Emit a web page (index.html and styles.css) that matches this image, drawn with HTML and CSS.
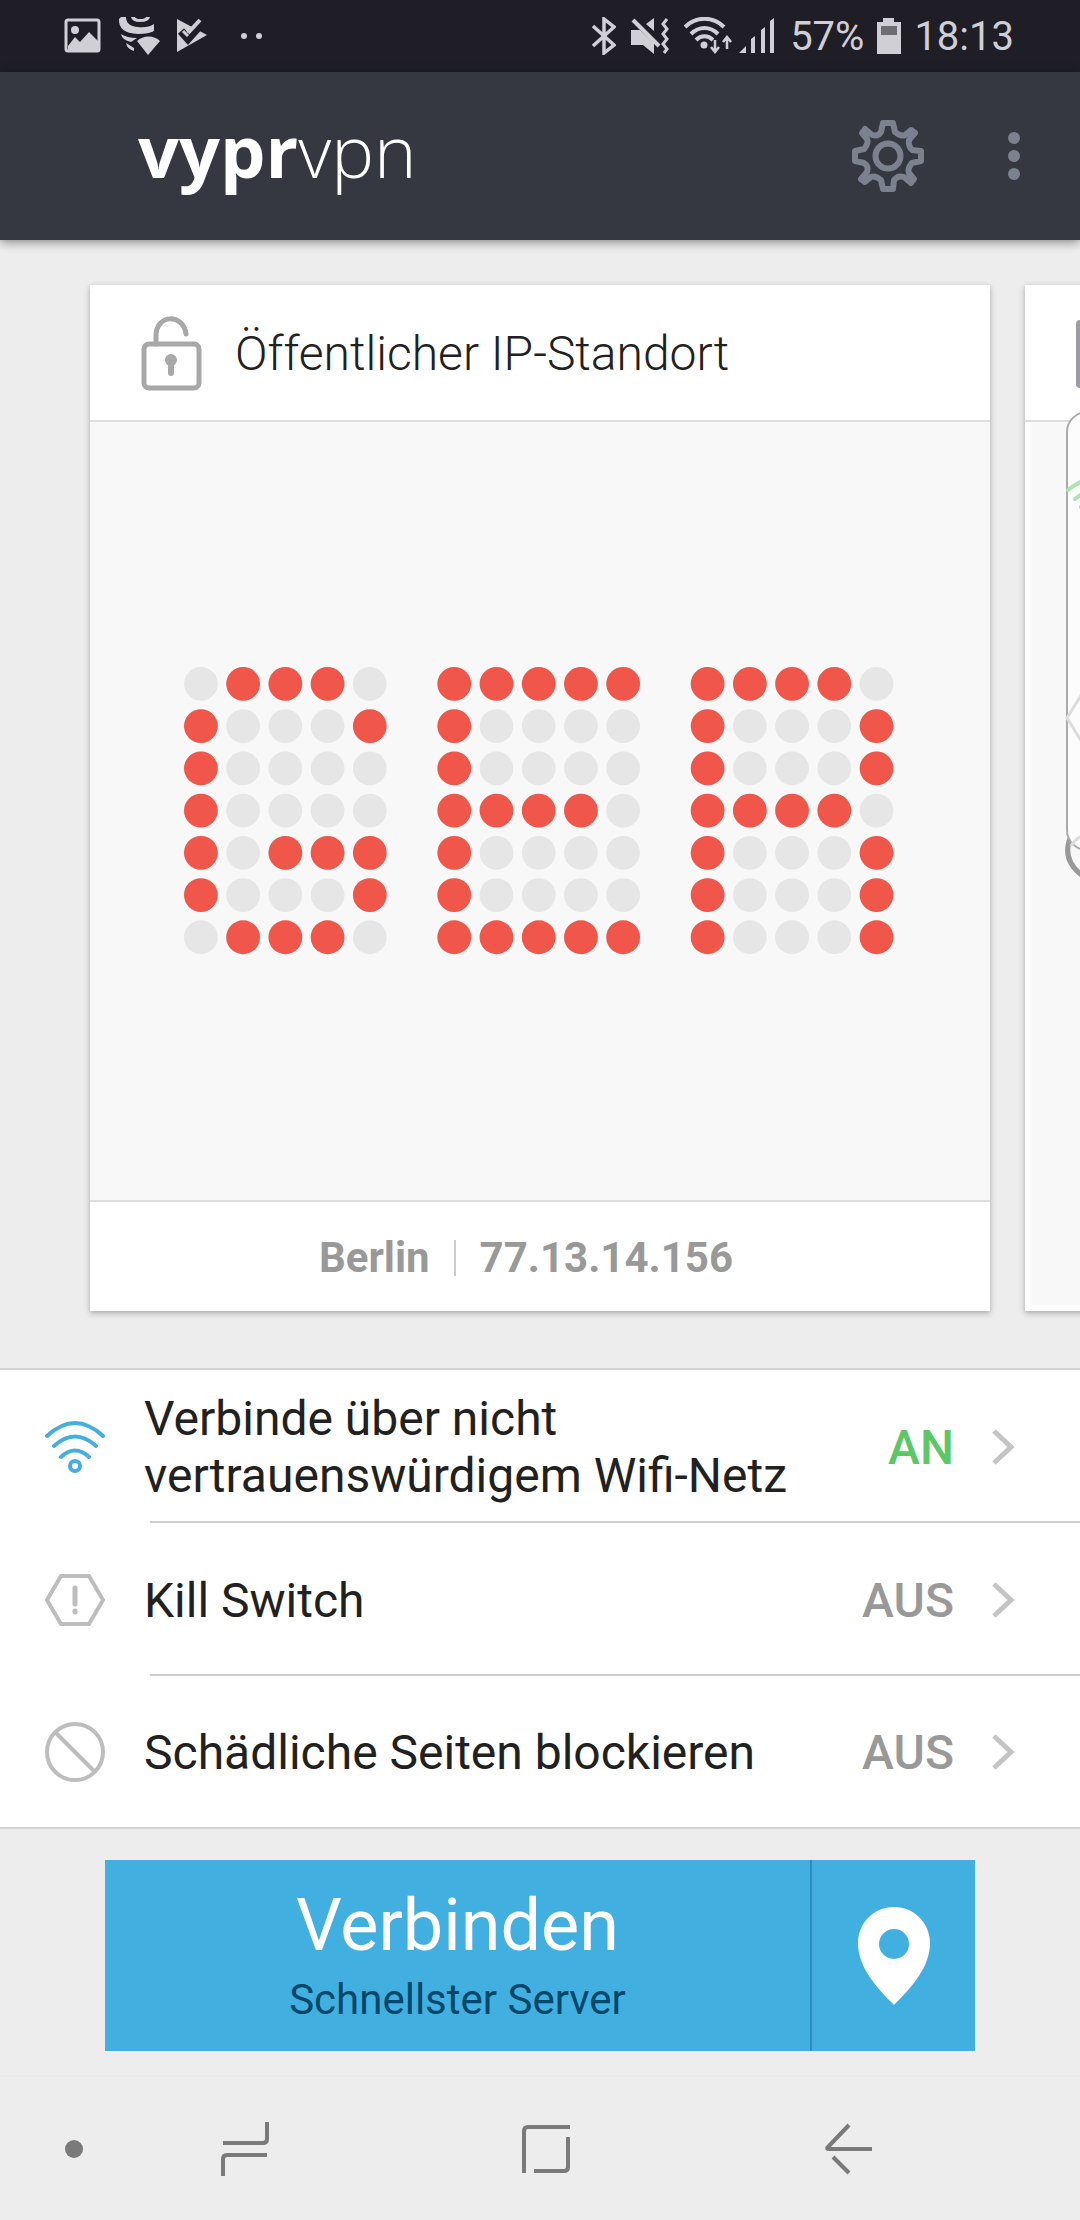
FILE: index.html
```html
<!DOCTYPE html>
<html lang="de">
<head>
<meta charset="utf-8">
<meta name="viewport" content="width=device-width, initial-scale=1">
<title>VyprVPN</title>
<link rel="stylesheet" href="styles.css">
</head>
<body>
<div class="app">
  <div class="status">
    <div class="status-group notices">
      <svg width="38" height="36" viewBox="0 0 38 36"><rect x="2" y="2" width="33" height="31" rx="2" fill="none" stroke="currentColor" stroke-width="3"/><circle cx="11" cy="12" r="4" fill="currentColor"/><path d="M4 28l7-9 5 5 9-10 9 9v9H4z" fill="currentColor"/></svg>
      <svg width="42" height="40" viewBox="0 0 42 40"><path d="M1 3Q0 17 20 18Q31 18 36 15V8Q30 12 20 11Q8 10 8 1H3Z" fill="currentColor"/><path d="M13 1Q14 6 22 6Q31 6 32 1H28Q27 3 22 3Q18 3 17 1Z" fill="currentColor"/><path d="M3 18Q9 22 19 22L13 26Q4 24 3 18ZM8 27L16 32V35Q9 33 8 27Z" fill="currentColor"/><path d="M19 25c6-6 17-6 23 0L30 39z" fill="currentColor"/></svg>
      <svg width="32" height="36" viewBox="0 0 32 36"><path d="M1 1L31 17L1 34Z" fill="currentColor"/><path d="M5 13L12 21L27 4" fill="none" stroke="#1f1e27" stroke-width="8"/><path d="M12 15L24 2" stroke="currentColor" stroke-width="4"/><path d="M7 13l5 5" stroke="currentColor" stroke-width="3"/></svg>
      <svg class="s-dots" width="24" height="8" viewBox="0 0 24 8"><circle cx="4" cy="4" r="3" fill="currentColor"/><circle cx="19" cy="4" r="3" fill="currentColor"/></svg>
    </div>
    <div class="status-group system">
      <svg width="24" height="38" viewBox="0 0 24 38"><path d="M1 9l21 19-10 8V2l10 8L1 29" fill="none" stroke="currentColor" stroke-width="3.500"/></svg>
      <svg width="40" height="38" viewBox="0 0 40 38"><path d="M1 13h9l14 13v11L13 28H1zM16 7l8-6v13z" fill="currentColor"/><path d="M3 3l26 26" stroke="currentColor" stroke-width="4"/><path d="M37 2l-4 5 4 5-4 5 4 5-4 5 4 5-3 4" fill="none" stroke="currentColor" stroke-width="3"/></svg>
      <svg class="s-wifi" width="48" height="38" viewBox="0 0 48 38"><path d="M1 10C12-1 29-1 40 10M7 17c8-8 19-8 27 0M12 23c5-5 12-5 17 0" fill="none" stroke="currentColor" stroke-width="4"/><circle cx="20" cy="28" r="3.500" fill="currentColor"/><path d="M31 23v11M27 30l4 5 4-5M43 32V21M39 25l4-5 4 5" fill="none" stroke="currentColor" stroke-width="2.500"/></svg>
      <svg width="38" height="38" viewBox="0 0 38 38"><path d="M1 36l7-7v7zM13 22l4-3v17h-4zM23 13l4-3v26h-4zM32 4l4-3v35h-4z" fill="currentColor"/></svg>
      <span>57%</span>
      <svg class="battery" width="26" height="38" viewBox="0 0 26 38"><path d="M7 1h11v4h7v32H1V5h6z" fill="currentColor"/><path d="M5 9h16v9H5z" fill="#6e6d72"/></svg>
      <span>18:13</span>
    </div>
  </div>

  <header class="topbar">
    <h1 class="brand"><b>vypr</b>vpn</h1>
    <button class="icon-button" aria-label="Einstellungen">
      <svg width="76" height="76" viewBox="-38 -38 76 76" fill="none" stroke="currentColor" stroke-width="6" stroke-linejoin="round"><circle r="12.500"/><path d="M-5-33H5L7-24Q13-19 17-21L23-26L27-23L21-16Q20-10 24-6L33-5V5L24 7Q19 13 21 17L26 23L23 27L16 21Q10 19 6 24L5 33H-5L-7 24Q-13 19-17 21L-23 26L-27 23L-21 16Q-19 10-24 7L-33 5V-5L-24-7Q-19-13-21-17L-26-23L-23-27L-16-21Q-10-19-7-24Z"/></svg>
    </button>
    <button class="icon-button" aria-label="Mehr Optionen">
      <svg width="14" height="50" viewBox="0 0 14 50" fill="currentColor"><circle cx="7" cy="7" r="6"/><circle cx="7" cy="25" r="6"/><circle cx="7" cy="43" r="6"/></svg>
    </button>
  </header>

  <main class="content">
    <section class="carousel">
      <article class="card">
        <div class="card-head">
          <svg width="62" height="76" viewBox="0 0 62 76" fill="none" stroke="#a8a8a8" stroke-width="5"><rect x="3" y="28" width="55" height="44" rx="5"/><path d="M15 28V20C15-3 43-2 45 18" stroke-linecap="round"/><circle cx="30" cy="44" r="6" fill="#a8a8a8" stroke="none"/><path d="M30 46v11" stroke-width="6" stroke-linecap="round"/></svg>
          <h2>Öffentlicher IP-Standort</h2>
        </div>
        <div class="card-body matrix">
          <svg viewBox="0 0 504 204" role="img" aria-label="GER" fill="none" stroke-width="24" stroke-linecap="round" stroke-dasharray="0 30">
            <defs><path id="grid" d="M12 12h121M12 42h121M12 72h121M12 102h121M12 132h121M12 162h121M12 192h121"/></defs>
            <g stroke="#e6e6e6"><use href="#grid"/><use href="#grid" x="180"/><use href="#grid" x="360"/></g>
            <g stroke="#f1564a">
              <path d="M42 12h61M12 42v121M132 42h1M72 132h61M132 162h1M42 192h61"/>
              <path d="M192 12h121M192 42v121M222 102h61M192 192h121"/>
              <path d="M372 12v181M402 12h61M492 42v31M402 102h61M492 132v61"/>
            </g>
          </svg>
        </div>
        <div class="card-foot"><span>Berlin</span><i></i><span>77.13.14.156</span></div>
      </article>
      <article class="card next">
        <div class="card-head">
          <svg width="62" height="68" viewBox="0 0 62 68"><rect width="62" height="68" rx="4" fill="#9c9ca6"/></svg>
        </div>
        <div class="card-body">
          <svg class="phone" width="240" height="490" viewBox="0 0 240 490" fill="none">
            <path d="M12 426Q-4 455 28 474Q45 482 68 480" stroke="#999" stroke-width="5"/>
            <rect x="6" y="6" width="210" height="438" rx="20" fill="#fcfcfc" stroke="#aaa" stroke-width="2"/>
            <path d="M7 84Q40 58 73 84M14 93Q40 72 66 93M20 101Q40 87 58 101" stroke="#a9e5ad" stroke-width="4" stroke-linecap="round"/>
            <path d="M6 312l18-29h36l18 29-18 29H24zM10 440q10-16 28-9" stroke="#ddd" stroke-width="3"/>
          </svg>
        </div>
      </article>
    </section>

    <section class="options">
      <button class="option">
        <svg width="60" height="60" viewBox="0 0 60 60" fill="none" stroke="#45aedc" stroke-width="4" stroke-linecap="round"><path d="M2 19Q30-7 58 19M9 29Q30 10 51 29M16 40Q30 27 44 40"/><circle cx="30" cy="49" r="5"/></svg>
        <span class="option-row"><span class="label">Verbinde über nicht vertrauenswürdigem Wifi-Netz</span><span class="state on">AN</span>
        <svg width="24" height="38" viewBox="0 0 24 38" fill="none" stroke="#c4c4c4" stroke-width="5"><path d="M3 3l17 16L3 35"/></svg></span>
      </button>
      <button class="option">
        <svg width="60" height="60" viewBox="0 0 60 60" fill="none" stroke="#bdbdbd" stroke-width="4"><path d="M16 6h28l14 24-14 24H16L2 30z"/><path d="M30 18v16M30 41v1" stroke-width="5" stroke-linecap="round"/></svg>
        <span class="option-row"><span class="label">Kill Switch</span><span class="state">AUS</span>
        <svg width="24" height="38" viewBox="0 0 24 38" fill="none" stroke="#c4c4c4" stroke-width="5"><path d="M3 3l17 16L3 35"/></svg></span>
      </button>
      <button class="option">
        <svg width="60" height="60" viewBox="0 0 60 60" fill="none" stroke="#bdbdbd" stroke-width="4"><circle cx="30" cy="30" r="28"/><path d="M11 11l38 38"/></svg>
        <span class="option-row"><span class="label">Schädliche Seiten blockieren</span><span class="state">AUS</span>
        <svg width="24" height="38" viewBox="0 0 24 38" fill="none" stroke="#c4c4c4" stroke-width="5"><path d="M3 3l17 16L3 35"/></svg></span>
      </button>
    </section>

    <section class="actions">
      <button class="connect"><span class="connect-title">Verbinden</span><span class="connect-sub">Schnellster Server</span></button>
      <button class="server" aria-label="Serverauswahl">
        <svg width="72" height="98" viewBox="0 0 72 98"><path fill="#fff" fill-rule="evenodd" d="M36 0C16 0 0 16 0 36C0 60 18 80 36 98C54 80 72 60 72 36C72 16 56 0 36 0ZM36 22a15 15 0 1 1 0 30a15 15 0 1 1 0-30Z"/></svg>
      </button>
    </section>
  </main>

  <nav class="navbar">
    <button aria-label="Leiste anheften"><svg width="20" height="54" viewBox="0 0 20 54"><circle cx="10" cy="27" r="9" fill="#7a7a7a"/></svg></button>
    <button aria-label="Letzte Apps"><svg width="48" height="54" viewBox="0 0 48 54" fill="none" stroke="#7a7a7a" stroke-width="4"><path d="M46 0v17q0 4-4 4H2M2 54V37q0-4 4-4h40"/></svg></button>
    <button aria-label="Startseite"><svg width="50" height="54" viewBox="0 0 50 54" fill="none" stroke="#7a7a7a" stroke-width="4"><path d="M3 51V9q0-4 4-4h42M47 15v30q0 4-4 4H13"/></svg></button>
    <button aria-label="Zurück"><svg width="48" height="54" viewBox="0 0 48 54" fill="none" stroke="#7a7a7a" stroke-width="4"><path d="M24 3L3 25q-2 2 1 2h43M8 35l16 16"/></svg></button>
  </nav>
</div>
</body>
</html>
```
FILE: styles.css
```css
* {
  box-sizing: border-box;
}

body {
  margin: 0;
  background: #ededed;
  color: #212121;
  font-family: Roboto, "Liberation Sans", sans-serif;
}

svg {
  display: block;
  flex: none;
}

button {
  margin: 0;
  padding: 0;
  border: 0;
  background: none;
  color: inherit;
  font: inherit;
}

.app {
  display: flex;
  flex-direction: column;
  min-height: 100vh;
  overflow: hidden;
}

/* System status bar */
.status {
  display: flex;
  align-items: center;
  justify-content: space-between;
  height: 72px;
  padding: 0 66px 0 64px;
  background: #1f1e27;
  color: #d0cfd6;
  font-size: 40px;
}

.status-group {
  display: flex;
  align-items: center;
}

.notices {
  gap: 16px;
}

.s-dots {
  margin-left: 16px;
}

.system {
  gap: 14px;
}

.s-wifi {
  margin-right: -8px;
}

.battery {
  margin: 0 -2px;
}

/* App bar */
.topbar {
  display: flex;
  align-items: center;
  height: 168px;
  padding: 0 59px 0 138px;
  background: #353741;
  box-shadow: 0 2px 10px rgba(0, 0, 0, 0.45);
  color: #7c8190;
}

.brand {
  flex: 1;
  margin: 0;
  padding-bottom: 12px;
  color: #fff;
  font: 300 72px/92px "Open Sans", sans-serif;
}

.brand b {
  font-weight: 700;
}

.icon-button + .icon-button {
  margin-left: 81px;
}

.content {
  display: flex;
  flex: 1;
  flex-direction: column;
}

/* Card carousel */
.carousel {
  display: flex;
  flex: 1;
  gap: 35px;
  padding: 45px 90px 57px;
}

.card {
  display: flex;
  flex: 0 0 100%;
  flex-direction: column;
  background: #fff;
  box-shadow: 0 2px 6px rgba(0, 0, 0, 0.3);
}

.card-head {
  display: flex;
  align-items: center;
  gap: 32px;
  height: 137px;
  padding: 2px 51px 0;
  border-bottom: 2px solid #dedede;
}

.card-head h2 {
  margin: 0;
  font-size: 48px;
  font-weight: 300;
}

.card-body {
  position: relative;
  flex: 1;
  background: #f8f8f8;
}

.matrix {
  display: flex;
  align-items: center;
  justify-content: center;
  padding: 40px 2px 40px 0;
}

.matrix svg {
  width: 79%;
}

.card-foot {
  display: flex;
  align-items: center;
  justify-content: center;
  height: 111px;
  padding: 2px 28px 0 0;
  border-top: 2px solid #dedede;
  color: #999;
  font-size: 42px;
  font-weight: 700;
}

.card-foot i {
  width: 2px;
  height: 36px;
  margin: 0 24px;
  background: #ccc;
}

.next .card-body {
  border: solid #fff;
  border-width: 0 6px 6px;
}

.phone {
  position: absolute;
  top: -16px;
  left: 30px;
}

/* Option list */
.options {
  border: solid #d4d4d4;
  border-width: 2px 0;
  background: #fff;
}

.option {
  display: flex;
  align-items: center;
  gap: 39px;
  width: 100%;
  padding-left: 45px;
  font-size: 48px;
  line-height: 57px;
  text-align: left;
}

.option-row {
  display: flex;
  flex: 1;
  align-items: center;
  min-height: 153px;
  padding: 1px 65px 0 0;
  background: linear-gradient(#d0d0d0, #d0d0d0) 6px 100% / 100% 2px no-repeat;
}

.option:last-child .option-row {
  min-height: 151px;
  background: none;
}

.label {
  flex: 1;
  padding-right: 60px;
}

.state {
  margin-right: 37px;
  color: #999;
  font-weight: 500;
}

.on {
  color: #5cc767;
}

/* Connect buttons */
.actions {
  display: flex;
  gap: 2px;
  margin: 31px 105px 24px;
  background: #2a8ebf;
}

.connect,
.server {
  height: 191px;
  background: #42afe1;
}

.connect {
  display: flex;
  flex: 1;
  flex-direction: column;
  align-items: center;
  justify-content: center;
  padding-top: 4px;
}

.connect-title {
  color: #fff;
  font-size: 72px;
  line-height: 84px;
}

.connect-sub {
  color: #03476b;
  font-size: 42px;
  line-height: 64px;
}

.server {
  display: flex;
  align-items: center;
  justify-content: center;
  width: 163px;
}

/* System navigation */
.navbar {
  display: grid;
  grid-template-columns: 148fr 193fr 410fr 196fr 133fr;
  align-items: center;
  height: 145px;
  border-top: 2px solid #e9e9e9;
}

.navbar button {
  display: flex;
  justify-content: center;
}
```
